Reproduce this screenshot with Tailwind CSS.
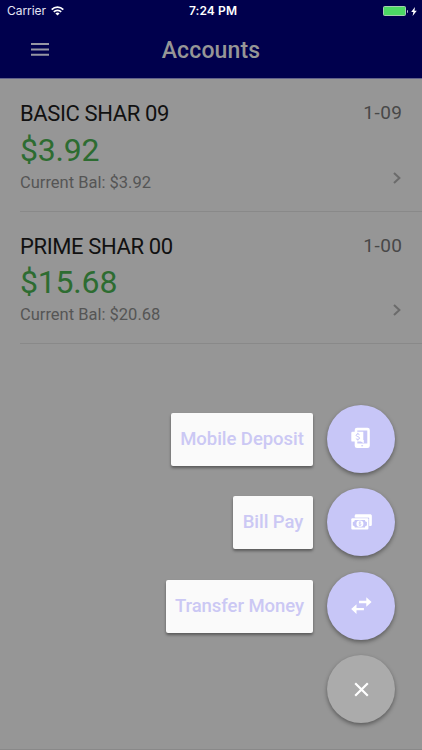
<!DOCTYPE html>
<html lang="en">
<head>
  <meta charset="UTF-8" />
  <meta name="viewport" content="width=device-width, initial-scale=1" />
  <title>Accounts</title>
  <script src="https://cdn.jsdelivr.net/npm/@tailwindcss/browser@4"></script>
</head>
<body class="bg-[#969696] font-[Roboto,sans-serif]">
  <div class="relative w-[422px] h-[750px] overflow-hidden flex flex-col">

    <!-- Header -->
    <header class="h-[79px] shrink-0 bg-[#00004d] border-b border-[#62628a]">
      <div class="h-[22px] grid grid-cols-3 items-center pl-[7px] pr-[5px] text-white font-[Inter,sans-serif] text-[12px]">
        <div class="flex items-center gap-[5px]">
          <span class="tracking-[-0.05px] text-[#e4e4f4]">Carrier</span>
          <svg class="w-[13px] h-[10px] mb-[1px]" viewBox="0 0 13 10" fill="none" stroke="#fff" stroke-width="1.7">
            <path d="M.7 3.6a8.2 8.2 0 0 1 11.6 0M2.8 5.9a5.2 5.2 0 0 1 7.4 0" />
            <path d="M6.5 9.6L4.4 7.5a3 3 0 0 1 4.2 0z" fill="#fff" stroke="none" />
          </svg>
        </div>
        <span class="text-center font-semibold tracking-[0.1px] whitespace-nowrap pl-[2px]">7:24 PM</span>
        <div class="flex items-center justify-end">
          <div class="w-[23px] h-[10px] bg-[#4cd964] border border-[#a3cfae] rounded-[1.5px]"></div>
          <div class="w-[1.5px] h-[3px] ml-[0.5px] mr-[3px] bg-[#b9b9d4] rounded-r"></div>
          <svg class="w-[6px] h-[9px]" viewBox="0 0 6 9" fill="#fff"><path d="M3.9 0L.2 5h2.2L1.6 9 5.8 3.7H3.5z" /></svg>
        </div>
      </div>
      <div class="h-[56px] grid grid-cols-[60px_1fr_60px] items-center">
        <svg class="w-[18px] h-[13px] ml-[31px] mb-[1px]" viewBox="0 0 18 13" fill="#9696a3"><path d="M0 0h18v2H0zM0 5.4h18v2H0zM0 10.8h18v2H0z" /></svg>
        <h1 class="text-center text-[23px] leading-none font-medium tracking-[0.15px] text-[#969696] mt-[1px]">Accounts</h1>
      </div>
    </header>

    <!-- Account list -->
    <main>
      <section class="ml-5 pr-5 h-[132.5px] border-b border-[#898989] flex justify-between">
        <div class="pt-[22px]">
          <h2 class="text-[22px] leading-[26px] tracking-[-0.38px] text-[#111]">BASIC SHAR 09</h2>
          <p class="text-[32px] leading-[38px] mt-[4px] tracking-[-0.2px] text-[#2d6c31]">$3.92</p>
          <p class="text-[16.5px] leading-[20px] mt-[4px] text-[#555]">Current Bal: $3.92</p>
        </div>
        <div class="flex flex-col items-end">
          <span class="mt-[22px] -mr-[0.5px] text-[19px] leading-[24px] tracking-[0.5px] text-[#484848]">1-09</span>
          <svg class="w-[8px] h-[12px] mt-[47px] mr-[1px]" viewBox="0 0 8 12" fill="none" stroke="#6b6b6b" stroke-width="2"><path d="M1 .9L6.4 6 1 11.1" /></svg>
        </div>
      </section>
      <section class="ml-5 pr-5 h-[132.5px] border-b border-[#898989] flex justify-between">
        <div class="pt-[22px]">
          <h2 class="text-[22px] leading-[26px] tracking-[-0.38px] text-[#111]">PRIME SHAR 00</h2>
          <p class="text-[32px] leading-[38px] mt-[3.5px] tracking-[-0.2px] text-[#2d6c31]">$15.68</p>
          <p class="text-[16.5px] leading-[20px] mt-[3.5px] text-[#555]">Current Bal: $20.68</p>
        </div>
        <div class="flex flex-col items-end">
          <span class="mt-[22px] -mr-[0.5px] text-[19px] leading-[24px] tracking-[0.5px] text-[#484848]">1-00</span>
          <svg class="w-[8px] h-[12px] mt-[46.5px] mr-[1px]" viewBox="0 0 8 12" fill="none" stroke="#6b6b6b" stroke-width="2"><path d="M1 .9L6.4 6 1 11.1" /></svg>
        </div>
      </section>
    </main>

    <div class="mt-auto h-px bg-[#898989]"></div>

    <!-- Speed dial menu -->
    <div class="absolute right-[27px] top-[404.5px] flex flex-col items-end gap-[15.5px] text-[18.5px] font-medium tracking-[-0.05px] text-[#cbc8f4] whitespace-nowrap">
      <div class="flex items-center gap-[14px]">
        <span class="h-[53px] w-[142px] mt-[1px] pt-[1px] flex items-center justify-center bg-[#fafafa] rounded-[2px] shadow-[0_2px_3px_rgba(0,0,0,0.4)]">Mobile Deposit</span>
        <button class="size-[68px] rounded-full bg-[#c7c6f7] flex items-center justify-center shadow-[0_2px_4px_rgba(0,0,0,0.4)]">
          <svg class="w-[20px] h-[22px] mb-[1px]" viewBox="0 0 20 22">
            <path fill="#fff" fill-rule="evenodd" d="M6 .8h10.5a2.3 2.3 0 0 1 2.3 2.3v15.6a2.3 2.3 0 0 1-2.3 2.3H6a2.3 2.3 0 0 1-2.3-2.3V3.1A2.3 2.3 0 0 1 6 .8zM6.3 3.6v13h10v-13z" />
            <path fill="#fff" d="M1.5 4.7h10.8V13h.5v3.2L9.9 14.6H1.5a1.2 1.2 0 0 1-1.2-1.2V5.9a1.2 1.2 0 0 1 1.2-1.2z" />
            <path fill="none" stroke="#c7c6f7" stroke-width="1" d="M8.5 7.7c-.4-.8-3.4-1-3.4.6 0 1.7 3.5 1 3.5 2.8 0 1.7-3.2 1.5-3.7.4M6.8 5.8v1.3M6.8 12.3v1.3" />
            <path fill="#c7c6f7" d="M10.3 18.2h1.8v1.1h-1.8z" />
          </svg>
        </button>
      </div>
      <div class="flex items-center gap-[14px]">
        <span class="h-[53px] w-[80px] pt-[2px] flex items-center justify-center bg-[#fafafa] rounded-[2px] shadow-[0_2px_3px_rgba(0,0,0,0.4)]">Bill Pay</span>
        <button class="size-[68px] rounded-full bg-[#c7c6f7] flex items-center justify-center shadow-[0_2px_4px_rgba(0,0,0,0.4)]">
          <svg class="w-[21px] h-[16px] mb-[1px]" viewBox="0 0 21 16">
            <path fill="#fff" d="M5 .5h14.4a1.2 1.2 0 0 1 1.2 1.2v9a1.2 1.2 0 0 1-1.2 1.2h-1V4.2a1 1 0 0 0-1-1H3.8V1.7A1.2 1.2 0 0 1 5 .5z" />
            <rect x=".3" y="4.2" width="17.1" height="11.2" rx="1" fill="#fff" />
            <path fill="#c7c6f7" d="M3.8 6h10.1a2 2 0 0 0 2 2v3.6a2 2 0 0 0-2 2H3.8a2 2 0 0 0-2-2V8a2 2 0 0 0 2-2z" />
            <ellipse cx="8.9" cy="9.8" rx="3.5" ry="3.2" fill="#fff" />
            <path fill="none" stroke="#c7c6f7" d="M10.1 8.8c-.3-.8-2.3-.8-2.3.2s2.3.6 2.3 1.7-2 1-2.4.2M8.9 7.2v5.2" stroke-width=".7" />
            <path fill="#fff" d="M5 .5h14.4a1.2 1.2 0 0 1 1.2 1.2v9a1.2 1.2 0 0 1-1.2 1.2h-1V3.4H3.8V1.7A1.2 1.2 0 0 1 5 .5z" />
          </svg>
        </button>
      </div>
      <div class="flex items-center gap-[14px]">
        <span class="h-[53px] w-[147px] mt-[1px] pt-[1px] flex items-center justify-center bg-[#fafafa] rounded-[2px] shadow-[0_2px_3px_rgba(0,0,0,0.4)]">Transfer Money</span>
        <button class="size-[68px] rounded-full bg-[#c7c6f7] flex items-center justify-center shadow-[0_2px_4px_rgba(0,0,0,0.4)]">
          <svg class="w-[21px] h-[17px]" viewBox="0 0 21 17" fill="#fff">
            <path d="M8 3.8h7.3V.2L20.6 5l-5.3 4.8V6.2H8zM12.9 10.9H5.5V7.3L.2 12.1l5.3 4.8v-3.6h7.4z" />
          </svg>
        </button>
      </div>
      <button class="size-[68px] rounded-full bg-[#ababab] flex items-center justify-center shadow-[0_2px_4px_rgba(0,0,0,0.4)]">
        <svg class="size-[15px]" viewBox="0 0 15 15" fill="none" stroke="#fff" stroke-width="2.2"><path d="M1.2 1.2l12.6 12.6M13.8 1.2L1.2 13.8" /></svg>
      </button>
    </div>
  </div>
</body>
</html>
